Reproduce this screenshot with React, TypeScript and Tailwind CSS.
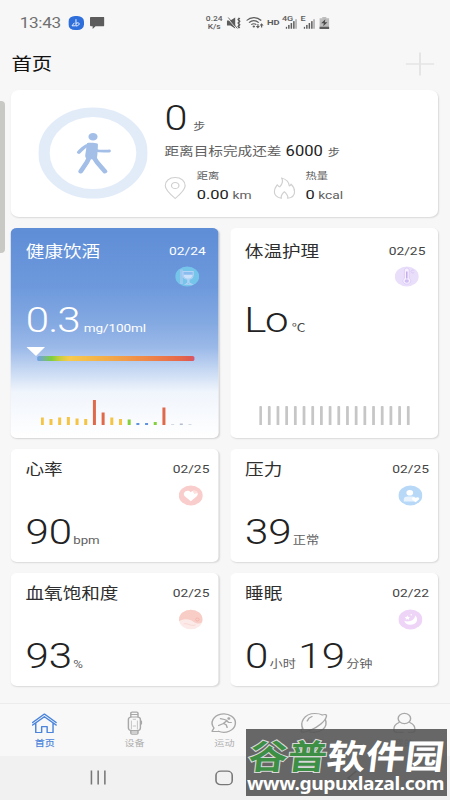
import React from 'react';
import clsx from 'clsx';

type MetricCardProps = Readonly<{
	title: string;
	date: string;
	icon: React.ReactNode;
	children?: React.ReactNode;
}>;

type TabProps = Readonly<{
	label: string;
	active?: boolean;
	children?: React.ReactNode;
}>;

const alcoholBars = [
	{ height: 7.5, color: '#f4c445' },
	{ height: 6, color: '#f4c445' },
	{ height: 7.5, color: '#f4c445' },
	{ height: 8, color: '#f4c445' },
	{ height: 6.5, color: '#f4c445' },
	{ height: 6, color: '#f4c445' },
	{ height: 25, color: '#e0694a' },
	{ height: 12.5, color: '#e0694a' },
	{ height: 7.5, color: '#f4c445' },
	{ height: 6, color: '#f4c445' },
	{ height: 5.5, color: '#83cf3c' },
	{ height: 2, color: '#5f93e0' },
	{ height: 2, color: '#5f93e0' },
	{ height: 3, color: '#83cf3c' },
	{ height: 17.5, color: '#e0694a' },
	{ height: 0.7, color: '#c4cad6' },
	{ height: 1.5, color: '#b4bdd0' },
	{ height: 0.7, color: '#c4cad6' },
];

const SignalBars = () => (
	<svg width="9.5" height="10" viewBox="0 0 10 10" fill="#5c5c5c">
		<rect x="0" y="8" width="1.3" height="2" />
		<rect x="2.2" y="6" width="1.3" height="4" />
		<rect x="4.4" y="4" width="1.3" height="6" />
		<rect x="6.6" y="2" width="1.3" height="8" />
		<rect x="8.8" y="0" width="1.2" height="10" />
	</svg>
);

const StatusBar = () => (
	<div className="flex h-[45px] items-center pl-[16.5px] text-[#5c5c5c]">
		<span className="w-[40px] text-[14.3px] leading-[48px] tracking-[-0.3px] text-[#707070]">
			13:43
		</span>
		<svg width="13" height="14" viewBox="0 0 13 14">
			<rect width="13" height="14" rx="5.5" fill="#2f6fdc" />
			<path
				d="M6.3 3.2v6.6M6.3 7.4c3-2 4.3 1.8 0 2.7M5 6.8L3 9.8h3"
				fill="none"
				stroke="#fff"
				strokeWidth=".8"
			/>
		</svg>
		<svg className="ml-[5.5px]" width="12" height="12" viewBox="0 0 12 12">
			<path d="M.6 0h10.8l.6.6v8l-.6.6H4.6L2.2 12V9.2H.6L0 8.6V.6z" fill="#5c5c5c" />
		</svg>
		<div className="ml-[82.5px] w-[18px] pt-px text-center text-[7px] font-medium leading-[8px]">
			<div>0.24</div>
			<div>K/s</div>
		</div>
		<svg className="ml-[1.5px]" width="12" height="12" viewBox="0 0 12 12">
			<path d="M0 3.5h3L7 .5v11L3 8.5H0z" fill="#5c5c5c" />
			<path d="M0 .5l8 11" stroke="#f7f7f7" strokeWidth=".8" />
			<path d="M1.2 .5l7.6 11" stroke="#5c5c5c" strokeWidth=".8" />
			<path
				d="M10.6 .8l-1 1.8 1 1.7-1 1.7 1 1.7-1 1.8 1 1.7"
				fill="none"
				stroke="#5c5c5c"
				strokeWidth="1.5"
			/>
		</svg>
		<svg className="ml-[3.5px]" width="15" height="12" viewBox="0 0 15 12">
			<g fill="none" stroke="#5c5c5c" strokeWidth="1.1">
				<path d="M.5 3.5C4-.3 9-.3 12.7 3.5" />
				<path d="M2.5 5.6c2.5-2.4 5.6-2.4 8.1 0" />
				<path d="M4.4 7.7c1.4-1.3 3-1.3 4.2 0" />
			</g>
			<circle cx="6.5" cy="9.6" r="1" fill="#5c5c5c" />
			<path d="M8.2 8.9h3.4l-1.7 2.5zM11.3 8.6L13 6.2l1.7 2.4zM9.5 7h.9v2h-.9zM12.5 8.4h1v2.200h-1z" fill="#5c5c5c" />
		</svg>
		<span className="ml-[3px] w-[11px] text-[7.8px] font-bold leading-[12px]">HD</span>
		<div className="relative ml-[1.5px] flex h-[13px] w-[12px] items-end justify-end">
			<SignalBars />
			<span className="absolute left-0 top-[-1px] bg-[#f7f7f7]/70 text-[7.5px] font-medium leading-[7px]">
				4G
			</span>
		</div>
		<div className="relative ml-[3.5px] flex h-[13px] w-[11.5px] items-end justify-end">
			<SignalBars />
			<span className="absolute left-0 top-[-1px] text-[7.5px] font-medium leading-[7px]">E</span>
		</div>
		<svg className="ml-[4px]" width="8.5" height="12" viewBox="0 0 8 12">
			<path d="M2.3 0h3.4v1.2H8V12H0V1.2h2.3z" fill="#bdbdbd" />
			<path d="M0 9.8h8V12H0z" fill="#5c5c5c" />
			<path d="M4.9 2.2L1.4 6.3h2.2l-.5 3 3.5-4H4.4z" fill="#4a4a4a" />
		</svg>
	</div>
);

const WalkRing = () => (
	<svg width="91" height="92" viewBox="0 0 91 92">
		<circle cx="45.5" cy="46" r="40.8" fill="none" stroke="#e2ecf9" strokeWidth="9.5" />
		<g fill="none" stroke="#a3bfe8" strokeLinecap="round" strokeLinejoin="round">
			<path d="M41 38.5c-2.5.5-4.5 3.5-7.3 6.8" strokeWidth="3.2" />
			<path d="M47.5 43.2c4 1.4 8 1 11.5.8" strokeWidth="2.8" />
			<path d="M42.5 50l-2 5-5.3 9.5M46 50l3 5.5 6.500 9" strokeWidth="4" />
		</g>
		<g fill="#a3bfe8">
			<circle cx="45.5" cy="29.7" r="3.8" />
			<path d="M40.5 36.2c1.200-.8 7-.6 8.600.3.700.4.500 1.300.5 2.200L49.200 47c-.2 2.500-.4 4-1 5.200h-7.400c-1.300-1-1.900-2.300-1.800-3.700z" />
		</g>
	</svg>
);

const StepsCard = () => (
	<section className="flex h-[127px] rounded-[7px] bg-white shadow-[0.5px_1px_1.5px_rgba(0,0,0,0.12)]">
		<div className="w-[128px] pl-[22.5px] pt-[17.5px]">
			<WalkRing />
		</div>
		<div className="pt-[10px] text-[#606060]">
			<div className="flex h-[36px] items-baseline">
				<span className="text-[34.5px] font-light leading-[36px] text-[#222]">0</span>
				<span className="ml-[5px] text-[10px]">步</span>
			</div>
			<div className="mt-[5px] flex h-[20px] items-baseline leading-[20px]">
				<span className="text-[12.2px]">距离目标完成还差</span>
				<span className="ml-[3.5px] text-[13.8px] text-[#222]">6000</span>
				<span className="ml-[4px] text-[10.2px]">步</span>
			</div>
			<div className="mt-[7px] flex">
				<svg className="mt-[8px]" width="18" height="24" viewBox="0 0 18 24" fill="none" stroke="#d0d0d0">
					<path d="M9 22.5C5 18.5.7 14 .7 9.8.7 5 4 1.5 9 1.5s8.3 3.5 8.3 8.3C17.3 14 13 18.5 9 22.5z" />
					<circle cx="9" cy="9.5" r="3.1" />
				</svg>
				<div className="ml-[9px] w-[63.5px]">
					<div className="text-[9.4px] leading-[16px]">距离</div>
					<div className="mt-[1px] flex items-baseline leading-[18px]">
						<span className="text-[13.7px] text-[#222]">0.00</span>
						<span className="ml-[3px] text-[11.5px]">km</span>
					</div>
				</div>
				<svg className="mt-[8px]" width="18" height="24" viewBox="0 0 18 24" fill="none" stroke="#d0d0d0">
					<path
						d="M6.5 22.3C3 21.5.6 18.8.6 15.5c0-3 1.2-4.7 2.5-6.8.6 1 1 1.8 2 2.2 2-2.8 3.3-6 1.5-9 3.5 1.2 6.3 4 6.5 8.2.8-.4 1.2-1.2 1.4-2 1.7 2 3 4.6 3 7.6 0 3.5-2.3 6-5.8 6.6.8-2.4-.6-4.2-2.8-6.600-1.600 2.200-3.300 4-2.400 6.600z"
						strokeLinejoin="round"
					/>
				</svg>
				<div className="ml-[9px]">
					<div className="text-[9.4px] leading-[16px]">热量</div>
					<div className="mt-[1px] flex items-baseline leading-[18px]">
						<span className="text-[13.7px] text-[#222]">0</span>
						<span className="ml-[3px] text-[11.5px]">kcal</span>
					</div>
				</div>
			</div>
		</div>
	</section>
);

const AlcoholCard = () => (
	<section className="flex h-[210px] flex-col rounded-[5px] bg-[linear-gradient(180deg,#5f8dd6_0%,#6d99dc_28%,#85aae2_46%,#9bb9e8_57%,#c3d6f2_67%,#f0f5fc_78%,#fff_100%)] text-white shadow-[0.5px_1px_1.5px_rgba(0,0,0,0.14)]">
		<div className="flex h-[34px] items-baseline justify-between pl-[12.5px] pr-[10.5px] pt-[12px] leading-[24px]">
			<h2 className="text-[15.5px]">健康饮酒</h2>
			<span className="self-start text-[11.5px] leading-[22px]">02/24</span>
		</div>
		<svg className="ml-[137px] mt-[4.5px]" width="20" height="21" viewBox="0 0 20 21">
			<circle cx="10" cy="10.5" r="10" fill="#75c4ea" />
			<path d="M4 3.5h2.5V18H4z" fill="#9cc8f0" />
			<path d="M6.5 5.5h8.500v3.500c0 3-1.700 4-3.500 4.300v3.500l2.500 1.500H8.500l2-1.500v-3.500C8.200 13 6.500 12 6.500 9z" fill="#8bbcf0" stroke="#b4d3f5" strokeWidth=".9" />
			<path d="M7 8.700h7.500c0 2.600-1.500 4-3.700 4S7 11.300 7 8.700z" fill="#cbe1f9" />
		</svg>
		<div className="mt-[15px] flex h-[38px] items-baseline pl-[12.5px] leading-[38px]">
			<span className="text-[35px] font-light tracking-[-0.8px]">0.3</span>
			<span className="ml-[3.5px] text-[11.3px] tracking-[-0.1px]">mg/100ml</span>
		</div>
		<div className="mt-[7px] pl-[12.5px]">
			<svg width="16" height="9" viewBox="0 0 16 9">
				<path d="M0 0h15.5L8 9z" fill="#fff" />
			</svg>
			<div className="ml-[9px] h-[5px] w-[131px] rounded-[1.5px] bg-[linear-gradient(90deg,#6f9df0_0%,#7ccf3f_9%,#c6cf3c_14%,#f7cb4c_20%,#f3ab48_45%,#ef8748_70%,#e66a4a_90%,#dd5b50_97%,#d3567a_100%)]" />
		</div>
		<svg className="mb-[12.5px] ml-[24.5px] mt-auto" width="127" height="25" viewBox="0 0 127 25">
			{alcoholBars.map(({ height, color }, i) => (
				<rect key={i} x={i * 7.24} y={25 - height} width="2.5" height={height} fill={color} />
			))}
		</svg>
	</section>
);

const TemperatureCard = () => (
	<section className="flex h-[210px] flex-col rounded-[5px] bg-white shadow-[0.5px_1px_1.5px_rgba(0,0,0,0.12)]">
		<div className="flex h-[34px] items-baseline justify-between pl-[12px] pr-[10.5px] pt-[12px] leading-[24px] text-[#2e2e2e]">
			<h2 className="text-[15.5px]">体温护理</h2>
			<span className="self-start text-[11.5px] leading-[22px] text-[#444]">02/25</span>
		</div>
		<svg className="ml-[137px] mt-[4.5px]" width="20" height="21" viewBox="0 0 20 21">
			<circle cx="10" cy="10.5" r="10" fill="#eadffb" />
			<path d="M8 4a2 2 0 0 1 4 0v8.3a3.3 3.3 0 1 1-4 0z" fill="#f6f0ff" stroke="#d9c8f6" strokeWidth=".7" />
			<path d="M9.4 5.5h1.2v7H9.4z" fill="#bfa9e6" />
			<circle cx="10" cy="15" r="1.8" fill="#d2bdf4" />
			<path d="M16.2 4.5a1.5 1.5 0 1 0 0 2" fill="none" stroke="#d5c3f2" strokeWidth=".7" />
		</svg>
		<div className="mt-[15px] flex h-[38px] items-baseline pl-[11.5px] leading-[38px]">
			<span className="text-[35px] font-light tracking-[-1.2px] text-[#222]">Lo</span>
			<span className="ml-[4px] text-[11.5px] text-[#4a4a4a]">℃</span>
		</div>
		<svg className="mb-[12.5px] ml-[24.2px] mt-auto" width="127" height="19.5" viewBox="0 0 127 19.5">
			{Array.from({ length: 18 }, (_, i) => (
				<rect key={i} x={i * 7.24} y="0" width="2.3" height="19.5" rx=".8" fill="#c6c6c6" />
			))}
		</svg>
	</section>
);

const MetricCard = ({ title, date, icon, children }: MetricCardProps) => (
	<section className="flex h-[113px] flex-col rounded-[5px] bg-white shadow-[0.5px_1px_1.5px_rgba(0,0,0,0.12)]">
		<div className="flex h-[32px] items-baseline justify-between pl-[12.2px] pr-[7.5px] pt-[9px] leading-[24px] text-[#2e2e2e]">
			<h2 className="text-[15.5px]">{title}</h2>
			<span className="self-start text-[11.5px] leading-[23px] text-[#444]">{date}</span>
		</div>
		<div className="ml-[140px] mt-[4px] h-[21px]">{icon}</div>
		<div className="mt-[8px] flex h-[38px] items-baseline pl-[12.2px] leading-[38px]">
			{children}
		</div>
	</section>
);

const Value = ({ children }: { children: React.ReactNode }) => (
	<span className="text-[35px] font-light text-[#222]">{children}</span>
);

const Unit = ({ children }: { children: React.ReactNode }) => (
	<span className="ml-px text-[11px] text-[#606060]">{children}</span>
);

const HeartIcon = () => (
	<svg width="20" height="21" viewBox="0 0 20 21">
		<circle cx="10" cy="10.5" r="10" fill="#f9cdcb" />
		<path d="M10 16.3L5 11.3C2.5 8.3 6.5 3.3 10 7.3c3.5-4 7.5 1 5 4z" fill="#fff" />
		<path d="M11.5 6c2-1.3 4 0 4.200 2l-2.700 1z" fill="#fbe0de" />
	</svg>
);

const PressureIcon = () => (
	<svg width="20" height="21" viewBox="0 0 20 21">
		<circle cx="10" cy="10.5" r="10" fill="#b8d8f7" />
		<circle cx="9.5" cy="7.7" r="2.8" fill="#fff" />
		<path d="M4.5 16.5v-2.3c0-2 1.5-2.7 3-2.7h4.5c1.5 0 2.5.8 2.5 2v3z" fill="#e8f3fe" />
		<path d="M14.3 17.3l-2.800-2.800c-1.200-1.900 1.300-3.300 2.800-1.500 1.500-1.800 4-.4 2.800 1.500z" fill="#fff" />
	</svg>
);

const OxygenIcon = () => (
	<svg width="20" height="21" viewBox="0 0 20 21">
		<circle cx="10" cy="10.5" r="9.8" fill="#fbeae7" />
		<path d="M.2 10.5a9.8 9.8 0 0 1 19.6 0c0 1-.2 2-.6 3-2 1.6-4.6 1.2-7-.8S6 8.800.2 12z" fill="#f8cdc6" />
		<circle cx="15.5" cy="10.5" r="1.5" fill="none" stroke="#efaca6" strokeWidth=".6" />
		<path d="M4 15c3-1.5 5 2.5 10 1" fill="none" stroke="#f5d3ce" strokeWidth=".7" />
	</svg>
);

const SleepIcon = () => (
	<svg width="20" height="21" viewBox="0 0 20 21">
		<circle cx="10" cy="10.5" r="10" fill="#eed5f8" />
		<path d="M14 6.5c3.5 4.2.8 9.3-4.100 9.300-2.600 0-4.400-1.500-5-4 3 1.600 8.500.4 9.100-5.300z" fill="#fff" />
		<path d="M7.5 6.5l.8 1.400 1.500.3-1.100 1 .2 1.500-1.400-.7-1.400.7.2-1.500-1.100-1 1.500-.3z" fill="#fff" />
		<circle cx="10.7" cy="5.8" r=".7" fill="#fff" />
	</svg>
);

const Tab = ({ label, active, children }: TabProps) => (
	<div className="flex w-[74.8px] flex-col items-center pt-[7px]">
		<svg
			width="26"
			height="24"
			viewBox="0 0 26 24"
			fill="none"
			stroke={active ? '#4a84dc' : '#a8a8a8'}
			strokeWidth="1.2"
			strokeLinecap="round"
			strokeLinejoin="round"
		>
			{children}
		</svg>
		<span
			className={clsx(
				'mt-[2px] text-[8.4px] leading-[13px]',
				active ? 'font-medium text-[#4a84dc]' : 'text-[#b0b0b0]',
			)}
		>
			{label}
		</span>
	</div>
);

const TabBar = () => (
	<nav className="flex h-[53px] border-t border-[#ececec] bg-[#f8f8f8]">
		<Tab label="首页" active>
			<path d="M3.2 11.5L13 3l9.8 8.5M3.2 14L13 5.7l9.8 8.3M5.8 12.3v9.2h4.9v-5.8h4.6v5.8h4.9v-9.2" />
		</Tab>
		<Tab label="设备">
			<rect x="8" y="6" width="10" height="13.5" rx="2.5" />
			<path d="M10.5 10v8M15.5 10v8M12 8.3h2M12 15h2" strokeWidth=".6" />
			<path d="M10 6V2.3c0-.8.4-1.1 1.1-1.1h3.8c.7 0 1.1.3 1.1 1.1V6M10 3.5h6M10 19.5V22c0 .8.4 1.1 1.1 1.1h3.8c.7 0 1.1-.3 1.1-1.1v-2.5M10 21h6M18.8 10v3" />
		</Tab>
		<Tab label="运动">
			<path d="M4.3 17A9.7 9.2 0 1 1 8 20.2M4.3 17L2.7 20.3l5 .2" />
			<path d="M13 8.5l-3.3-.8M13 8.5l2.2 1-3 3-4 2M12.2 12.5l2.3 1.3.8 2.7M15 10l1.7 1.5h2" />
			<circle cx="16.7" cy="7.5" r=".7" fill="#a8a8a8" />
		</Tab>
		<Tab label="发现">
			<path d="M3.5 18C.7 12 4 2.5 13.5 2.5c2.7 0 4.5.4 6 1.5M22 8c3 9-4.5 15-13 13M19.5 4c2.7-1 4-.5 3.5 1.5-1 5-7 10.5-13 13.5-4 2-7.5 3-8 1-.2-.8.2-1.5 1-2.5M7 10c.7-2.2 2-3.7 4-4.5" />
		</Tab>
		<Tab label="我的">
			<circle cx="13" cy="7.5" r="5.2" />
			<path d="M8.5 11.5C5.5 13 4 15.5 4.2 19c.1 1.7.8 2.3 2.3 2.3H12M17.5 11.5c3 1.5 4.5 4 4.3 7.5-.1 1.7-.8 2.3-2.3 2.3h-3" />
		</Tab>
	</nav>
);

const SystemNav = () => (
	<div className="flex h-[44px] items-center bg-[#f1f1f1] pb-px pl-[75px]">
		<svg width="14" height="15" viewBox="0 0 14 15" stroke="#777" strokeWidth="1.3">
			<path d="M1.2 .5v14M6.8 .5v14M12.4 .5v14" />
		</svg>
		<svg className="ml-[90px]" width="16" height="16" viewBox="0 0 16 16">
			<rect x="1" y="1.2" width="13.5" height="13.5" rx="4" fill="none" stroke="#777" strokeWidth="1.3" />
		</svg>
		<svg className="ml-[94px]" width="9" height="16" viewBox="0 0 9 16">
			<path d="M8 1L1 8l7 7" fill="none" stroke="#777" strokeWidth="1.3" />
		</svg>
	</div>
);

const Watermark = () => (
	<div className="absolute left-[246px] top-[729px] h-[67px] w-[201px] overflow-hidden bg-[#575757]/90 text-white">
		<div className="ml-[3px] mt-[7px] w-[170px] origin-left scale-x-[1.15] whitespace-nowrap font-['Noto_Sans_CJK_SC'] text-[34px] font-bold leading-[38px]">
			<span className="inline-block skew-x-[-6deg] text-[#3d8f45] [-webkit-text-stroke:2px_#d8d8d8] [paint-order:stroke_fill]">
				谷普
			</span>
			<span className="inline-block skew-x-[-6deg]">软件园</span>
		</div>
		<div className="mt-[-1px] w-[168px] origin-left scale-x-[1.04] whitespace-nowrap pl-px font-['Noto_Sans'] text-[18.5px] font-bold leading-[20px] tracking-[-0.4px]">
			www.gupuxlazal.com
		</div>
	</div>
);

export default function App() {
	return (
		<div className="relative h-[800px] w-[450px] overflow-hidden bg-[#f7f7f7]">
			{/* the phone screen is laid out 375 wide and stretched to the full width */}
			<div className="flex h-[800px] w-[375px] origin-top-left scale-x-[1.2] flex-col font-[Roboto,'Noto_Sans_CJK_SC',sans-serif]">
				<StatusBar />
				<header className="flex h-[44.5px] items-center justify-between pb-[7px] pl-[9.5px] pr-[13px]">
					<h1 className="text-[17px] leading-[24px] text-[#111]">首页</h1>
					<svg width="24" height="24" viewBox="0 0 24 24" stroke="#e5e5e5" strokeWidth="1.7">
						<path d="M0 12h24M12 .5v23" />
					</svg>
				</header>
				<main className="flex flex-1 flex-col gap-[11px] pl-[9px] pr-[10px]">
					<StepsCard />
					<div className="grid grid-cols-2 gap-x-[10px] gap-y-[11px]">
						<AlcoholCard />
						<TemperatureCard />
						<MetricCard title="心率" date="02/25" icon={<HeartIcon />}>
							<Value>90</Value>
							<Unit>bpm</Unit>
						</MetricCard>
						<MetricCard title="压力" date="02/25" icon={<PressureIcon />}>
							<Value>39</Value>
							<Unit>正常</Unit>
						</MetricCard>
						<MetricCard title="血氧饱和度" date="02/25" icon={<OxygenIcon />}>
							<Value>93</Value>
							<Unit>%</Unit>
						</MetricCard>
						<MetricCard title="睡眠" date="02/22" icon={<SleepIcon />}>
							<Value>0</Value>
							<Unit>小时</Unit>
							<span className="w-[2px]" />
							<Value>19</Value>
							<Unit>分钟</Unit>
						</MetricCard>
					</div>
				</main>
				<TabBar />
				<SystemNav />
			</div>
			<div className="absolute left-0 top-[101px] h-[152px] w-[5px] rounded-r-[4px] bg-[#c8c8c4]" />
			<Watermark />
		</div>
	);
}
